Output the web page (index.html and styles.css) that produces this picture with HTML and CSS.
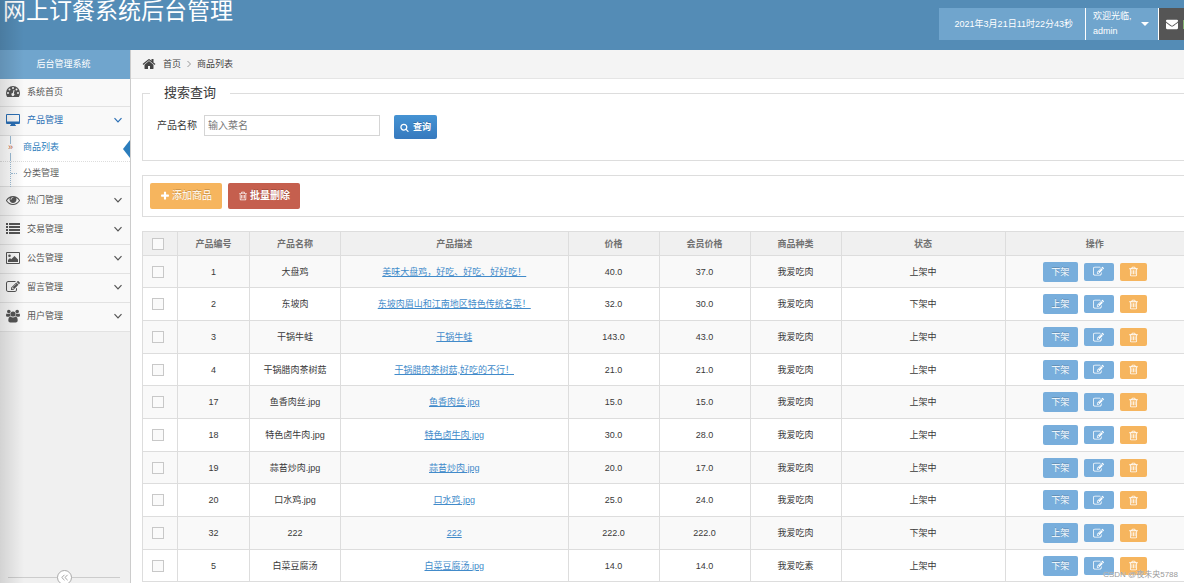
FILE: index.html
```html
<!DOCTYPE html>
<html lang="zh-CN">
<head>
<meta charset="utf-8">
<title>网上订餐系统后台管理</title>
<link rel="stylesheet" href="styles.css">
</head>
<body>
<svg class="sprite" aria-hidden="true">
  <symbol id="home" viewBox="0 0 1792 1792"><path d="M1472 992v480q0 26-19 45t-45 19h-384v-384h-256v384h-384q-26 0-45-19t-19-45v-480q0-1 .5-3t.5-3l575-474 575 474q1 2 1 6zm223-69l-62 74q-8 9-21 11h-3q-13 0-21-7l-692-577-692 577q-12 8-24 7-13-2-21-11l-62-74q-8-10-7-23.5t11-21.5l719-599q32-26 76-26t76 26l244 204v-195q0-14 9-23t23-9h192q14 0 23 9t9 23v408l219 182q10 8 11 21.5t-7 23.5z"/></symbol>
  <symbol id="search" viewBox="0 0 1792 1792"><path d="M1216 832q0-185-131.500-316.500t-316.500-131.500-316.500 131.500-131.500 316.500 131.500 316.500 316.500 131.500 316.500-131.500 131.500-316.500zm512 832q0 52-38 90t-90 38q-54 0-90-38l-343-342q-179 124-399 124-143 0-273.500-55.500t-225-150-150-225-55.500-273.500 55.500-273.500 150-225 225-150 273.500-55.500 273.500 55.500 225 150 150 225 55.500 273.500q0 220-124 399l343 343q37 37 37 90z"/></symbol>
  <symbol id="plus" viewBox="0 0 1792 1792"><path d="M1600 736v192q0 40-28 68t-68 28h-416v416q0 40-28 68t-68 28h-192q-40 0-68-28t-28-68v-416h-416q-40 0-68-28t-28-68v-192q0-40 28-68t68-28h416v-416q0-40 28-68t68-28h192q40 0 68 28t28 68v416h416q40 0 68 28t28 68z"/></symbol>
  <symbol id="eye" viewBox="0 0 1792 1792"><path d="M1664 960q-152-236-381-353 61 104 61 225 0 185-131.500 316.500t-316.500 131.500-316.500-131.500-131.500-316.500q0-121 61-225-229 117-381 353 133 205 333.500 326.500t434.500 121.500 434.500-121.500 333.500-326.500zm-720-384q0-20-14-34t-34-14q-125 0-214.500 89.500t-89.500 214.500q0 20 14 34t34 14 34-14 14-34q0-86 61-147t147-61q20 0 34-14t14-34zm848 384q0 34-20 69-140 230-376.500 368.500t-499.500 138.500-499.500-139-376.500-368q-20-35-20-69t20-69q140-229 376.500-368t499.500-139 499.500 139 376.500 368q20 35 20 69z"/></symbol>
  <symbol id="edit" viewBox="0 0 1792 1792"><path d="M888 1184l116-116-152-152-116 116v56h96v96h56zm440-720q-16-16-33 1l-350 350q-17 17-1 33t33-1l350-350q17-17 1-33zm80 594v190q0 119-84.500 203.500t-203.500 84.500h-832q-119 0-203.500-84.500t-84.500-203.500v-832q0-119 84.500-203.500t203.500-84.500h832q63 0 117 25 15 7 18 23 3 17-9 29l-49 49q-14 14-32 8-23-6-45-6h-832q-66 0-113 47t-47 113v832q0 66 47 113t113 47h832q66 0 113-47t47-113v-126q0-13 9-22l64-64q15-15 35-7t20 29zm-96-738l288 288-672 672h-288v-288zm444 132l-92 92-288-288 92-92q28-28 68-28t68 28l152 152q28 28 28 68t-28 68z"/></symbol>
  <symbol id="trash" viewBox="0 0 1792 1792"><path d="M576 704h128v640h-128zm256 0h128v640h-128zm256 0h128v640h-128zm256 756v-948h-896v948q0 22 7 40.500t14.500 27 10.500 8.500h832q3 0 10.500-8.500t14.500-27 7-40.500zm-672-1076h448l-48-117q-7-9-17-11h-317q-10 2-17 11zm928 32v64q0 14-9 23t-23 9h-96v948q0 83-47 143.500t-113 60.500h-832q-66 0-113-58.500t-47-141.500v-952h-96q-14 0-23-9t-9-23v-64q0-14 9-23t23-9h309l70-167q15-37 54-63t79-26h320q40 0 79 26t54 63l70 167h309q14 0 23 9t9 23z"/></symbol>
  <symbol id="mail" viewBox="0 0 1792 1792"><path d="M1792 710v794q0 66-47 113t-113 47h-1472q-66 0-113-47t-47-113v-794q44 49 101 87 362 246 497 345 57 42 92.500 65.500t94.500 48 110 24.500h2q51 0 110-24.500t94.500-48 92.500-65.500q170-123 498-345 57-39 100-87zm0-294q0 79-49 151t-122 123q-376 261-468 325-10 7-42.500 31t-54 38.500-52 32.500-57.500 27-50 9h-2q-23 0-50-9t-57.500-27-52-32.500-54-38.500-42.500-31q-91-64-262-182.500t-205-142.500q-62-42-117-115.500t-55-136.500q0-78 41.500-130t118.500-52h1472q65 0 112.500 47t47.500 113z"/></symbol>
  <symbol id="gauge" viewBox="0 0 14 14"><path fill-rule="evenodd" d="M7 1a7 7 0 0 1 7 7q0 2-1 3.700-.2.300-.6.300H1.600q-.4 0-.6-.3Q0 10 0 8a7 7 0 0 1 7-7zM2 7a1 1 0 1 0 0 2 1 1 0 0 0 0-2zm1.500-3.500a1 1 0 1 0 0 2 1 1 0 0 0 0-2zM7 2a1 1 0 1 0 0 2 1 1 0 0 0 0-2zm3.500 1.500a1 1 0 1 0 0 2 1 1 0 0 0 0-2zM12 7a1 1 0 1 0 0 2 1 1 0 0 0 0-2zM7.600 4.900 6.800 8a1.500 1.500 0 1 0 1 .3l.8-3.100z"/></symbol>
  <symbol id="desktop" viewBox="0 0 14 14"><path fill-rule="evenodd" d="M1 1h12q1 0 1 1v8q0 1-1 1H9l.4 1.200H10v.8H4v-.8h.6L5 11H1q-1 0-1-1V2q0-1 1-1zm0 1v6.500h12V2z"/></symbol>
  <symbol id="list" viewBox="0 0 14 14"><path d="M0 1h2v2H0zm3 0h11v2H3zM0 4h2v2H0zm3 0h11v2H3zM0 7h2v2H0zm3 0h11v2H3zM0 10h2v2H0zm3 0h11v2H3z"/></symbol>
  <symbol id="picture" viewBox="0 0 14 14"><path fill-rule="evenodd" d="M1 1h12q1 0 1 1v10q0 1-1 1H1q-1 0-1-1V2q0-1 1-1zm0 1v10h12V2zm1 9V9l2-2 1.200 1.200L8.500 5 12 8.500V11zm1.500-7.500a1.300 1.300 0 1 1 0 2.600 1.300 1.300 0 0 1 0-2.600z"/></symbol>
  <symbol id="group" viewBox="0 0 14 14"><circle cx="2.800" cy="2.600" r="1.800"/><circle cx="11.200" cy="2.600" r="1.800"/><circle cx="7" cy="5" r="2.600"/><path d="M.9 4.500q2 1 3 .1-.1 1.500.7 2.400-1 0-1.700.8H1.200Q0 7.800 0 6.600q0-2 .9-2.100zm12.200 0q-2 1-3 .1.100 1.500-.7 2.400 1 0 1.700.8h1.700q1.200 0 1.200-1.200 0-2-.9-2.100zM4.300 7.500Q7 9.400 9.700 7.500q2 .4 2 4 0 2-2 2H4.300q-2 0-2-2 0-3.600 2-4z"/></symbol>
  <symbol id="down" viewBox="0 0 10 10"><path d="M1.500 3.200 5 6.800l3.500-3.600" fill="none" stroke="currentColor" stroke-width="1.200"/></symbol>
</svg>
<div class="app">
  <header class="topbar">
    <h1 class="brand">网上订餐系统后台管理</h1>
    <div class="tools">
      <time class="clock">2021年3月21日11时22分43秒</time>
      <button class="user" type="button"><span>欢迎光临,<br>admin</span><i class="caret"></i></button>
      <button class="messages" type="button" aria-label="消息"><svg class="icon"><use href="#mail"/></svg><i class="badge"></i></button>
    </div>
  </header>
  <div class="body">
    <aside class="sidebar">
      <div class="side-title">后台管理系统</div>
      <nav>
        <a class="item first" href="#"><svg class="icon"><use href="#gauge"/></svg><span>系统首页</span></a>
        <a class="item open" href="#"><svg class="icon"><use href="#desktop"/></svg><span>产品管理</span><svg class="chev"><use href="#down"/></svg></a>
        <div class="submenu">
          <a class="sub current" href="#">商品列表</a>
          <a class="sub" href="#">分类管理</a>
        </div>
        <a class="item" href="#"><svg class="icon"><use href="#eye"/></svg><span>热门管理</span><svg class="chev"><use href="#down"/></svg></a>
        <a class="item" href="#"><svg class="icon"><use href="#list"/></svg><span>交易管理</span><svg class="chev"><use href="#down"/></svg></a>
        <a class="item" href="#"><svg class="icon"><use href="#picture"/></svg><span>公告管理</span><svg class="chev"><use href="#down"/></svg></a>
        <a class="item" href="#"><svg class="icon"><use href="#edit"/></svg><span>留言管理</span><svg class="chev"><use href="#down"/></svg></a>
        <a class="item" href="#"><svg class="icon"><use href="#group"/></svg><span>用户管理</span><svg class="chev"><use href="#down"/></svg></a>
      </nav>
      <div class="collapse"><button type="button" aria-label="收起菜单"><svg viewBox="0 0 10 10"><path d="M5 2 2 5l3 3M8.500 2l-3 3 3 3" fill="none" stroke="currentColor"/></svg></button></div>
    </aside>
    <main class="main">
      <div class="crumbs"><svg class="icon"><use href="#home"/></svg><a href="#">首页</a><svg class="sep" viewBox="0 0 6 10"><path d="m1.500 2 3 3-3 3" fill="none" stroke="currentColor"/></svg><span>商品列表</span></div>
      <div class="content">
        <fieldset class="panel filter">
          <legend>搜索查询</legend>
          <form class="search">
            <label for="name">产品名称</label>
            <input id="name" type="text" placeholder="输入菜名">
            <button class="btn query" type="button"><svg class="icon"><use href="#search"/></svg>查询</button>
          </form>
        </fieldset>
        <div class="panel actions">
          <button class="btn big warn" type="button"><svg class="icon"><use href="#plus"/></svg>添加商品</button>
          <button class="btn big danger" type="button"><svg class="icon"><use href="#trash"/></svg>批量删除</button>
        </div>
        <table class="goods">
          <colgroup><col class="c-check"><col class="c-id"><col class="c-mid"><col><col class="c-mid"><col class="c-mid"><col class="c-mid"><col class="c-state"><col class="c-ops"></colgroup>
          <thead><tr><th><input type="checkbox" aria-label="全选"></th><th>产品编号</th><th>产品名称</th><th>产品描述</th><th>价格</th><th>会员价格</th><th>商品种类</th><th>状态</th><th>操作</th></tr></thead>
          <tbody>
            <tr><td><input type="checkbox" aria-label="选择 1"></td><td>1</td><td>大盘鸡</td><td><a href="#">美味大盘鸡，好吃、好吃、好好吃！</a></td><td>40.0</td><td>37.0</td><td>我爱吃肉</td><td>上架中</td><td><div class="ops"><button class="btn shelf" type="button">下架</button><button class="btn edit" type="button" aria-label="编辑"><svg class="icon"><use href="#edit"/></svg></button><button class="btn del" type="button" aria-label="删除"><svg class="icon"><use href="#trash"/></svg></button></div></td></tr>
            <tr><td><input type="checkbox" aria-label="选择 2"></td><td>2</td><td>东坡肉</td><td><a href="#">东坡肉眉山和江南地区特色传统名菜！</a></td><td>32.0</td><td>30.0</td><td>我爱吃肉</td><td>下架中</td><td><div class="ops"><button class="btn shelf" type="button">上架</button><button class="btn edit" type="button" aria-label="编辑"><svg class="icon"><use href="#edit"/></svg></button><button class="btn del" type="button" aria-label="删除"><svg class="icon"><use href="#trash"/></svg></button></div></td></tr>
            <tr><td><input type="checkbox" aria-label="选择 3"></td><td>3</td><td>干锅牛蛙</td><td><a href="#">干锅牛蛙</a></td><td>143.0</td><td>43.0</td><td>我爱吃肉</td><td>上架中</td><td><div class="ops"><button class="btn shelf" type="button">下架</button><button class="btn edit" type="button" aria-label="编辑"><svg class="icon"><use href="#edit"/></svg></button><button class="btn del" type="button" aria-label="删除"><svg class="icon"><use href="#trash"/></svg></button></div></td></tr>
            <tr><td><input type="checkbox" aria-label="选择 4"></td><td>4</td><td>干锅腊肉茶树菇</td><td><a href="#">干锅腊肉茶树菇,好吃的不行！</a></td><td>21.0</td><td>21.0</td><td>我爱吃肉</td><td>上架中</td><td><div class="ops"><button class="btn shelf" type="button">下架</button><button class="btn edit" type="button" aria-label="编辑"><svg class="icon"><use href="#edit"/></svg></button><button class="btn del" type="button" aria-label="删除"><svg class="icon"><use href="#trash"/></svg></button></div></td></tr>
            <tr><td><input type="checkbox" aria-label="选择 17"></td><td>17</td><td>鱼香肉丝.jpg</td><td><a href="#">鱼香肉丝.jpg</a></td><td>15.0</td><td>15.0</td><td>我爱吃肉</td><td>上架中</td><td><div class="ops"><button class="btn shelf" type="button">下架</button><button class="btn edit" type="button" aria-label="编辑"><svg class="icon"><use href="#edit"/></svg></button><button class="btn del" type="button" aria-label="删除"><svg class="icon"><use href="#trash"/></svg></button></div></td></tr>
            <tr><td><input type="checkbox" aria-label="选择 18"></td><td>18</td><td>特色卤牛肉.jpg</td><td><a href="#">特色卤牛肉.jpg</a></td><td>30.0</td><td>28.0</td><td>我爱吃肉</td><td>上架中</td><td><div class="ops"><button class="btn shelf" type="button">下架</button><button class="btn edit" type="button" aria-label="编辑"><svg class="icon"><use href="#edit"/></svg></button><button class="btn del" type="button" aria-label="删除"><svg class="icon"><use href="#trash"/></svg></button></div></td></tr>
            <tr><td><input type="checkbox" aria-label="选择 19"></td><td>19</td><td>蒜苔炒肉.jpg</td><td><a href="#">蒜苔炒肉.jpg</a></td><td>20.0</td><td>17.0</td><td>我爱吃肉</td><td>上架中</td><td><div class="ops"><button class="btn shelf" type="button">下架</button><button class="btn edit" type="button" aria-label="编辑"><svg class="icon"><use href="#edit"/></svg></button><button class="btn del" type="button" aria-label="删除"><svg class="icon"><use href="#trash"/></svg></button></div></td></tr>
            <tr><td><input type="checkbox" aria-label="选择 20"></td><td>20</td><td>口水鸡.jpg</td><td><a href="#">口水鸡.jpg</a></td><td>25.0</td><td>24.0</td><td>我爱吃肉</td><td>上架中</td><td><div class="ops"><button class="btn shelf" type="button">下架</button><button class="btn edit" type="button" aria-label="编辑"><svg class="icon"><use href="#edit"/></svg></button><button class="btn del" type="button" aria-label="删除"><svg class="icon"><use href="#trash"/></svg></button></div></td></tr>
            <tr><td><input type="checkbox" aria-label="选择 32"></td><td>32</td><td>222</td><td><a href="#">222</a></td><td>222.0</td><td>222.0</td><td>我爱吃肉</td><td>下架中</td><td><div class="ops"><button class="btn shelf" type="button">上架</button><button class="btn edit" type="button" aria-label="编辑"><svg class="icon"><use href="#edit"/></svg></button><button class="btn del" type="button" aria-label="删除"><svg class="icon"><use href="#trash"/></svg></button></div></td></tr>
            <tr><td><input type="checkbox" aria-label="选择 5"></td><td>5</td><td>白菜豆腐汤</td><td><a href="#">白菜豆腐汤.jpg</a></td><td>14.0</td><td>14.0</td><td>我爱吃素</td><td>上架中</td><td><div class="ops"><button class="btn shelf" type="button">下架</button><button class="btn edit" type="button" aria-label="编辑"><svg class="icon"><use href="#edit"/></svg></button><button class="btn del" type="button" aria-label="删除"><svg class="icon"><use href="#trash"/></svg></button></div></td></tr>
          </tbody>
        </table>
      </div>
    </main>
  </div>
  <div class="edge-shade"></div>
  <div class="watermark">CSDN @夜未央5788</div>
</div>
</body>
</html>
```
FILE: styles.css
```css
* { box-sizing: border-box; }
body {
  margin: 0;
  font: 9px/12px "Liberation Sans", "Noto Sans CJK SC", sans-serif;
  color: #393939;
  background: #fff;
}
button, input { font: inherit; }
button { cursor: pointer; }
a { color: inherit; text-decoration: none; }
.sprite { position: absolute; width: 0; height: 0; }
.icon { width: 14px; height: 14px; fill: currentColor; flex: none; }

.app {
  position: relative;
  display: flex;
  flex-direction: column;
  min-height: 100vh;
  overflow: hidden;
}

/* top bar */
.topbar {
  display: flex;
  justify-content: space-between;
  align-items: flex-start;
  height: 50px;
  padding-left: 3px;
  background: #548cb6;
  color: #fff;
}
.brand { margin: 0; font-size: 23px; line-height: 22px; font-weight: 400; }
.tools { display: flex; margin-top: 8px; height: 32px; }
.clock {
  display: flex;
  align-items: center;
  padding: 0 12px 0 16px;
  background: #70a5cd;
}
.user {
  display: flex;
  align-items: center;
  justify-content: space-between;
  width: 74px;
  padding: 0 9px 0 7px;
  border: 0;
  border-left: 1px solid #fff;
  border-right: 1px solid #fff;
  background: #70a5cd;
  color: #fff;
  line-height: 15px;
  text-align: left;
}
.caret { border: 4px solid transparent; border-top-color: #fff; border-bottom: 0; }
.messages {
  display: flex;
  align-items: center;
  gap: 5px;
  padding: 0 0 0 7px;
  border: 0;
  background: #555;
  color: #fff;
}
.messages .icon { width: 12px; height: 12px; }
.badge { width: 1px; height: 9px; background: #82af6f; }

.body { display: flex; flex: 1; }

/* sidebar */
.sidebar {
  display: flex;
  flex-direction: column;
  flex: none;
  width: 131px;
  border-right: 1px solid #ccc;
  background: #f0f0f0;
}
.side-title {
  height: 29px;
  line-height: 28px;
  padding-right: 3px;
  text-align: center;
  background: #70a5cd;
  color: #fff;
}
.item {
  display: flex;
  align-items: center;
  gap: 7px;
  height: 29px;
  padding: 0 7px 2px 6px;
  border-bottom: 1px solid #e2e2e2;
  background: #f9f9f9;
  color: #555;
}
.item.first { height: 28px; }
.item span { flex: 1; }
.item.open { color: #2b6fb5; }
.chev { width: 10px; height: 10px; }
.submenu { border-bottom: 1px solid #e2e2e2; background: #fff; }
.sub {
  position: relative;
  display: block;
  height: 25px;
  padding-left: 23px;
  line-height: 23px;
  color: #616161;
}
.sub + .sub { border-top: 1px dotted #ddd; }
.sub::before {
  content: "";
  position: absolute;
  left: 10px;
  top: 0;
  height: 25px;
  border-left: 1px dotted #9dbdd6;
}
.sub::after {
  content: "";
  position: absolute;
  left: 11px;
  top: 11px;
  width: 6px;
  border-top: 1px dotted #9dbdd6;
}
.sub.current { color: #2b7dbc; }
.sub.current::before {
  content: "»";
  left: 8px;
  width: 6px;
  border: 0;
  color: #c86139;
  background: linear-gradient(#fff, #fff) center / 6px 9px no-repeat, linear-gradient(#9dbdd6, #9dbdd6) 2px 0 / 1px 25px no-repeat;
}
.sub.current::after {
  left: auto;
  right: 0;
  top: 4px;
  width: 0;
  border: 9px solid transparent;
  border-width: 9px 7px 9px 0;
  border-right-color: #2b7dbc;
}
.collapse {
  display: flex;
  justify-content: center;
  margin: auto 10px -2px 8px;
  background: linear-gradient(#ccc, #ccc) center / 100% 1px no-repeat;
}
.collapse button {
  display: flex;
  width: 15px;
  height: 15px;
  padding: 2px;
  border: 1px solid #aaa;
  border-radius: 50%;
  background: #fff;
  color: #999;
}

/* main area */
.main { flex: 1; min-width: 0; }
.crumbs {
  display: flex;
  align-items: center;
  height: 29px;
  padding-left: 11px;
  border-bottom: 1px solid #e5e5e5;
  background: #f4f4f4;
  color: #444;
}
.crumbs a { margin-left: 7px; }
.sep { width: 6px; height: 10px; margin: 0 5px; color: #999; }
.content { padding: 6px 0 1px 11px; }
.panel { margin: 0; border: 1px solid #ddd; border-right: 0; }
.filter { padding: 0 0 21px 14px; }
legend {
  margin-left: -7px;
  padding: 0 14px;
  font-size: 13px;
  line-height: 16px;
}
.search { display: flex; align-items: flex-start; padding-top: 14px; font-size: 10px; line-height: 22px; }
.search input {
  width: 176px;
  height: 21px;
  margin: 0 14px 0 7px;
  padding: 0 3px;
  border: 1px solid #d5d5d5;
  line-height: 18px;
}
.search input::placeholder { color: #777; }
.btn {
  display: inline-flex;
  align-items: center;
  justify-content: center;
  padding: 0;
  border: 0;
  border-radius: 2px;
  color: #fff;
  text-shadow: 0 -1px 0 rgba(0, 0, 0, .2);
}
.query {
  gap: 4px;
  width: 43px;
  height: 24px;
  font-size: 9px;
  font-weight: 700;
  background: linear-gradient(#4593d3, #3679be);
}
.query .icon { width: 9px; height: 9px; }
.actions { display: flex; gap: 6px; margin-top: 14px; padding: 7px; }
.big { gap: 2px; width: 72px; height: 26px; font-size: 10px; }
.big .icon { width: 10px; height: 10px; }
.warn { background: #f6b55e; }
.danger { background: #c55f4e; font-weight: 700; }

/* goods table */
.goods {
  width: 100%;
  margin-top: 14px;
  border-collapse: collapse;
  table-layout: fixed;
  text-align: center;
}
.c-check { width: 35px; }
.c-id { width: 72px; }
.c-mid { width: 91px; }
.c-state { width: 164px; }
.c-ops { width: 179px; }
.goods th, .goods td { padding: 0; border: 1px solid #ddd; }
.goods th:last-child, .goods td:last-child { border-right: 0; }
.goods th { height: 24px; background: #f0f0f0; color: #707070; }
.goods td { height: 33px; }
.goods tr:nth-child(3n + 1) td { height: 32px; }
.goods tbody tr:nth-child(odd) { background: #f9f9f9; }
.goods td a { color: #428bca; text-decoration: underline; }
.goods input {
  appearance: none;
  display: block;
  width: 12px;
  height: 12px;
  margin: 0 auto 0 9px;
  border: 1px solid #c8c8c8;
  background: #fafafa;
}
.ops { display: flex; align-items: center; justify-content: center; gap: 6px; }
.shelf { width: 35px; height: 20px; background: #78aedc; }
.edit { width: 30px; height: 18px; background: #78aedc; }
.del { width: 27px; height: 18px; background: #f6b55e; }
.ops .icon { width: 11px; height: 11px; }

/* overlays */
.edge-shade {
  position: absolute;
  inset: 0 auto 0 0;
  width: 24px;
  background: linear-gradient(90deg, rgba(0, 0, 0, .12), rgba(0, 0, 0, 0));
  pointer-events: none;
}
.watermark {
  position: absolute;
  right: 6px;
  bottom: 2px;
  font-size: 8px;
  color: #999;
  text-shadow: 0 0 1px #fff;
  pointer-events: none;
}
```
